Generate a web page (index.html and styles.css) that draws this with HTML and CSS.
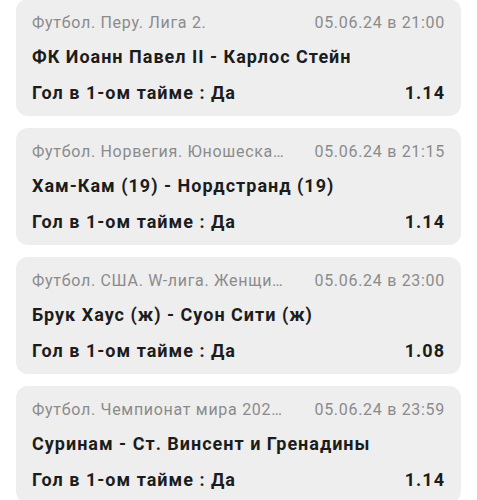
FILE: index.html
```html
<!DOCTYPE html>
<html lang="ru">
<head>
    <meta charset="UTF-8">
    <meta name="viewport" content="width=device-width, initial-scale=1.0">
    <title>Ставки</title>
    <link rel="stylesheet" href="styles.css">
</head>
<body>
    <div class="bets">
        <div class="bet">
            <div class="bet-head">
                <span class="bet-league">Футбол. Перу. Лига 2.</span>
                <span class="bet-date">05.06.24 в 21:00</span>
            </div>
            <div class="bet-match">ФК Иоанн Павел II - Карлос Стейн</div>
            <div class="bet-outcome">
                <span>Гол в 1-ом тайме : Да</span>
                <span>1.14</span>
            </div>
        </div>

        <div class="bet">
            <div class="bet-head">
                <span class="bet-league">Футбол. Норвегия. Юношеская лига</span>
                <span class="bet-date">05.06.24 в 21:15</span>
            </div>
            <div class="bet-match">Хам-Кам (19) - Нордстранд (19)</div>
            <div class="bet-outcome">
                <span>Гол в 1-ом тайме : Да</span>
                <span>1.14</span>
            </div>
        </div>

        <div class="bet">
            <div class="bet-head">
                <span class="bet-league">Футбол. США. W-лига. Женщины. Регулярный сезон</span>
                <span class="bet-date">05.06.24 в 23:00</span>
            </div>
            <div class="bet-match">Брук Хаус (ж) - Суон Сити (ж)</div>
            <div class="bet-outcome">
                <span>Гол в 1-ом тайме : Да</span>
                <span>1.08</span>
            </div>
        </div>

        <div class="bet">
            <div class="bet-head">
                <span class="bet-league">Футбол. Чемпионат мира 2026. Квалификация</span>
                <span class="bet-date">05.06.24 в 23:59</span>
            </div>
            <div class="bet-match">Суринам - Ст. Винсент и Гренадины</div>
            <div class="bet-outcome">
                <span>Гол в 1-ом тайме : Да</span>
                <span>1.14</span>
            </div>
        </div>
    </div>
</body>
</html>
```

FILE: styles.css
```css
body {
    font-family: Roboto, "Noto Sans", Arial, sans-serif;
    margin: 0;
    padding: 0;
    background-color: #fff;
    color: #1c1c1c;
}

.bets {
    display: flex;
    flex-direction: column;
    gap: 12px;
    padding: 0 16px;
    margin-top: -1px;
}

.bet {
    background-color: #eeeeee;
    border-radius: 12px;
    padding: 12px 16px 11px;
}

.bet-head {
    display: flex;
    justify-content: space-between;
    gap: 24px;
    font-size: 16px;
    line-height: 24px;
    letter-spacing: 0.7px;
    color: #8b8b8b;
}

.bet-league {
    white-space: nowrap;
    overflow: hidden;
    text-overflow: ellipsis;
}

.bet-date {
    flex-shrink: 0;
    white-space: nowrap;
}

.bet-match {
    margin-top: 10px;
    font-size: 18px;
    line-height: 24px;
    letter-spacing: 1px;
    font-weight: bold;
}

.bet-outcome {
    display: flex;
    justify-content: space-between;
    margin-top: 12px;
    font-size: 18px;
    line-height: 24px;
    letter-spacing: 1px;
    font-weight: bold;
}
```
